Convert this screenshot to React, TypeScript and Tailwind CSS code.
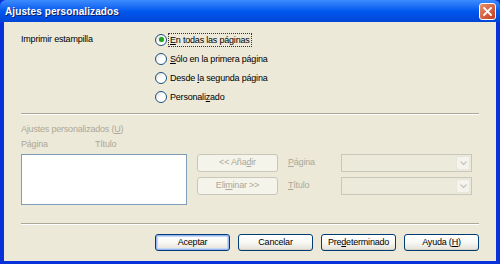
import React from 'react';

const font = { fontFamily: '"Liberation Sans", Arial, sans-serif' };

function Radio({ checked, label, focus }: { checked?: boolean; label: React.ReactNode; focus?: boolean }) {
  return (
    <div className="flex h-[19px] items-center">
      <span className="flex h-[12px] w-[12px] items-center justify-center rounded-full border border-[#1c5180] bg-gradient-to-br from-[#dcdcd7] via-white to-white">
        {checked && <span className="h-[5px] w-[5px] rounded-full bg-[#21a121] shadow-[0_0_1px_#63c663]" />}
      </span>
      <span className={'ml-[2px] px-[1px] leading-[12px] ' + (focus ? 'outline-1 outline-dotted outline-[#333]' : '')}>{label}</span>
    </div>
  );
}

function XpButton({ children, isDefault }: { children: React.ReactNode; isDefault?: boolean }) {
  return (
    <div
      className={
        'flex h-[17px] w-[75px] items-center justify-center rounded-[3px] border border-[#003c74] bg-gradient-to-b from-white via-[#f7f7f4] to-[#e3e1d6] text-black ' +
        (isDefault ? 'shadow-[inset_0_0_0_1px_#9ab8f1,inset_0_0_0_2px_#c5d5f5]' : 'shadow-[inset_0_-1px_0_#d6d0c5]')
      }
    >
      {children}
    </div>
  );
}

function DisabledButton({ children }: { children: React.ReactNode }) {
  return (
    <div className="flex h-[18px] w-[81px] items-center justify-center rounded-[3px] border border-[#c9c7ba] bg-[#f5f4ea] text-[#aca899]">
      {children}
    </div>
  );
}

function DisabledCombo() {
  return (
    <div className="flex h-[18px] w-[131px] items-stretch border border-[#c9c7ba] bg-[#ebeadb]">
      <div className="flex-1" />
      <div className="m-[1px] flex w-[14px] items-center justify-center rounded-[2px] border border-[#e8e6dc] bg-[#f4f3ee]">
        <svg width="7" height="5" viewBox="0 0 7 5">
          <path d="M0.5 0.5 L3.5 3.5 L6.5 0.5" fill="none" stroke="#c9c7ba" strokeWidth="1.3" />
        </svg>
      </div>
    </div>
  );
}

function Sep() {
  return <div className="h-[2px] border-t border-[#aca899] border-b border-b-white" />;
}

export default function App() {
  return (
    <div className="flex h-[264px] w-[500px] flex-col bg-[#0831d9] text-[9px] tracking-[-0.2px] text-black" style={font}>
      {/* title bar */}
      <div className="flex h-[22px] items-center justify-between rounded-t-[6px] bg-gradient-to-b from-[#3d8bff] via-[#0058ee] to-[#0046d6] pl-[5px] pr-[4px]">
        <span className="text-[10px] font-bold tracking-[0.1px] text-white [text-shadow:1px_1px_0_#0a1e6a]">Ajustes personalizados</span>
        <div className="flex h-[17px] w-[17px] items-center justify-center rounded-[3px] border border-white bg-gradient-to-br from-[#e8906a] to-[#c1391d]">
          <svg width="9" height="9" viewBox="0 0 9 9">
            <path d="M1 1 L8 8 M8 1 L1 8" stroke="white" strokeWidth="1.8" strokeLinecap="square" />
          </svg>
        </div>
      </div>
      {/* body */}
      <div className="flex flex-1 px-[4px] pb-[3px]">
        <div className="flex flex-1 flex-col bg-[#ece9d8] px-[17px]">
          <div className="flex pt-[8px]">
            <div className="flex h-[19px] w-[134px] items-center">Imprimir estampilla</div>
            <div className="flex flex-col">
              <Radio checked focus label={<><u>E</u>n todas las páginas</>} />
              <Radio label={<><u>S</u>ólo en la primera página</>} />
              <Radio label={<>Desde <u>l</u>a segunda página</>} />
              <Radio label={<>Personali<u>z</u>ado</>} />
            </div>
          </div>
          <div className="mt-[7px]">
            <Sep />
          </div>
          <div className="mt-[9px] flex h-[12px] items-center text-[#aca899]">
            Ajustes personalizados (<u>U</u>)
          </div>
          <div className="mt-[3px] flex h-[12px] items-center text-[#aca899]">
            <span className="w-[74px]">Página</span>
            <span>Título</span>
          </div>
          <div className="mt-[3px] flex">
            <div className="h-[51px] w-[166px] border border-[#7f9db9] bg-white" />
            <div className="ml-[10px] flex flex-col gap-[5px]">
              <DisabledButton>&lt;&lt; Aña<u>d</u>ir</DisabledButton>
              <DisabledButton>Eli<u>m</u>inar &gt;&gt;</DisabledButton>
            </div>
            <div className="ml-[10px] flex flex-col gap-[5px] text-[#aca899]">
              <div className="flex h-[18px] items-center">
                <span className="w-[53px]"><u>P</u>ágina</span>
                <DisabledCombo />
              </div>
              <div className="flex h-[18px] items-center">
                <span className="w-[53px]"><u>T</u>ítulo</span>
                <DisabledCombo />
              </div>
            </div>
          </div>
          <div className="mt-[18px]">
            <Sep />
          </div>
          <div className="mt-[9px] flex justify-end gap-[8px]">
            <XpButton isDefault>Aceptar</XpButton>
            <XpButton>Cancelar</XpButton>
            <XpButton>Pre<u>d</u>eterminado</XpButton>
            <XpButton>Ayuda (<u>H</u>)</XpButton>
          </div>
        </div>
      </div>
    </div>
  );
}
